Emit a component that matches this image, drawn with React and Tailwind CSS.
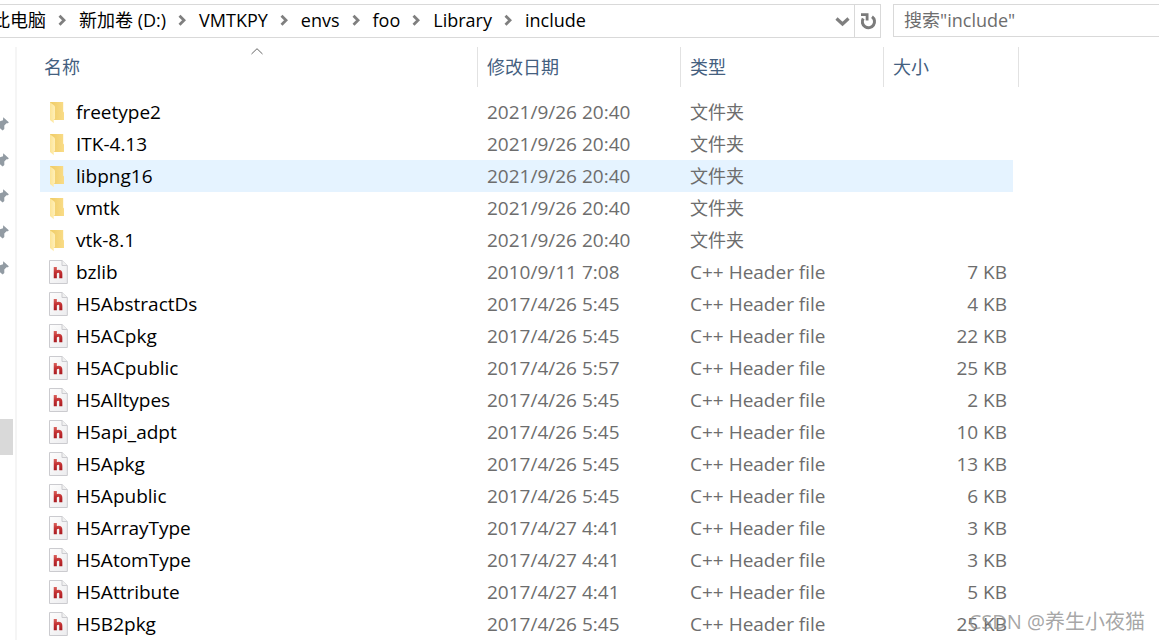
import React from 'react';

const crumbs = ['此电脑', '新加卷 (D:)', 'VMTKPY', 'envs', 'foo', 'Library', 'include'];

const folder = (name) => ({ name, date: '2021/9/26 20:40', folder: true });
const header = (name, date, size) => ({ name, date, size });

const rows = [
  folder('freetype2'),
  folder('ITK-4.13'),
  { ...folder('libpng16'), selected: true },
  folder('vmtk'),
  folder('vtk-8.1'),
  header('bzlib', '2010/9/11 7:08', '7 KB'),
  header('H5AbstractDs', '2017/4/26 5:45', '4 KB'),
  header('H5ACpkg', '2017/4/26 5:45', '22 KB'),
  header('H5ACpublic', '2017/4/26 5:57', '25 KB'),
  header('H5Alltypes', '2017/4/26 5:45', '2 KB'),
  header('H5api_adpt', '2017/4/26 5:45', '10 KB'),
  header('H5Apkg', '2017/4/26 5:45', '13 KB'),
  header('H5Apublic', '2017/4/26 5:45', '6 KB'),
  header('H5ArrayType', '2017/4/27 4:41', '3 KB'),
  header('H5AtomType', '2017/4/27 4:41', '3 KB'),
  header('H5Attribute', '2017/4/27 4:41', '5 KB'),
  header('H5B2pkg', '2017/4/26 5:45', '25 KB'),
];

function Chevron() {
  return (
    <svg className="h-3 w-[9px] shrink-0" viewBox="0 0 9 12" fill="none" stroke="#7f7f7f" strokeWidth="2.8" aria-hidden="true">
      <path d="M1.500 1.800 6 6.300 1.500 10.800" />
    </svg>
  );
}

function FolderIcon() {
  return (
    <svg className="h-6 w-5 shrink-0" viewBox="0 0 20 24" aria-hidden="true">
      <defs>
        <linearGradient id="folderBack" x1="0" y1="0" x2="1" y2="0">
          <stop offset="0" stopColor="#efcb66" />
          <stop offset="1" stopColor="#f9dc87" />
        </linearGradient>
        <linearGradient id="folderFlap" x1="0" y1="0" x2="1" y2="0">
          <stop offset="0" stopColor="#fce496" />
          <stop offset="1" stopColor="#ffefb8" />
        </linearGradient>
      </defs>
      <path d="M2 2h13.200v9.500l.8 1v7.500H6L2 19z" fill="url(#folderBack)" />
      <path d="M2 2.200 6.200 5.500q.8.700.8 1.800V19l-1.200 1v3.200L2 20z" fill="url(#folderFlap)" />
    </svg>
  );
}

function HeaderIcon() {
  return (
    <svg className="h-6 w-5 shrink-0" viewBox="0 0 20 24" aria-hidden="true">
      <defs>
        <linearGradient id="hLetter" gradientUnits="userSpaceOnUse" x1="0" y1="7" x2="0" y2="18">
          <stop offset="0" stopColor="#d9625c" />
          <stop offset=".5" stopColor="#c22f31" />
          <stop offset="1" stopColor="#aa1c22" />
        </linearGradient>
        <linearGradient id="hPage" x1="0" y1="0" x2="1" y2="1">
          <stop offset="0" stopColor="#fdfdfd" />
          <stop offset="1" stopColor="#ececee" />
        </linearGradient>
      </defs>
      <path d="M1.500.5h12.500l5.300 5v18H1.500z" fill="url(#hPage)" stroke="#cbcbcf" />
      <path d="M14 .5v5h5.300" fill="#f0f0f0" stroke="#cbcbcf" />
      <path d="M7.300 7v11.300M7.300 13q1.300-1.700 3.200-1.700 2.300 0 2.300 2.500v4.500" fill="none" stroke="url(#hLetter)" strokeWidth="3.100" />
    </svg>
  );
}

function Pin() {
  return (
    <svg className="h-4 w-[9px]" viewBox="0 0 9 16" fill="#929ba3" aria-hidden="true">
      <path d="M3.200 1.200 8.800 6.200 8 7.300 6.500 7.200 4.300 9.500v3.500L2.600 14.500 0 12.200V5.200l3-1z" />
    </svg>
  );
}

function ColumnHead({ children, className = '', sorted }) {
  return (
    <th scope="col" className={`relative h-10 border-r border-[#e2e2e2] p-0 text-left text-lg font-normal text-[#44607f] ${className}`}>
      {sorted && (
        <svg className="absolute left-1/2 top-0 -ml-2 h-2 w-3" viewBox="0 0 12 8" fill="none" stroke="#666" aria-hidden="true">
          <path d="M.5 7 6 1.700l5.500 5.300" />
        </svg>
      )}
      <button type="button" className="block leading-6">{children}</button>
    </th>
  );
}

export default function App() {
  return (
    <div className="relative flex h-screen flex-col overflow-hidden bg-white font-['Open_Sans','Noto_Sans_CJK_SC',sans-serif] text-black">
      <header className="flex gap-3 pt-1">
        <div className="flex h-[34px] min-w-0 flex-1 border border-l-0 border-[#d9d9d9]">
          <nav aria-label="路径" className="-ml-2 flex min-w-0 flex-1 items-center gap-3 overflow-hidden whitespace-nowrap pb-0.5 text-lg leading-8">
            {crumbs.map((label, i) => (
              <React.Fragment key={label}>
                {i > 0 && <Chevron />}
                <a href="#">{label}</a>
              </React.Fragment>
            ))}
          </nav>
          <button type="button" aria-label="以前的位置" className="flex w-6 items-center justify-center">
            <svg className="h-3 w-4" viewBox="0 0 16 12" fill="none" stroke="#7f7f7f" strokeWidth="3.200" aria-hidden="true">
              <path d="M2.500 3.500l6 5.500 6-5.500" />
            </svg>
          </button>
          <button type="button" aria-label="刷新" className="flex w-[26px] items-center justify-center border-l border-[#d9d9d9]">
            <svg className="h-[18px] w-[18px]" viewBox="0 0 18 18" aria-hidden="true">
              <path d="M4.200 6.500A6.100 6.100 0 1 0 13 4.700" fill="none" stroke="#7b7b7b" strokeWidth="3" />
              <path d="M2 1.200h7.500v7.300H6.700V4H2z" fill="#7b7b7b" />
            </svg>
          </button>
        </div>
        <input
          type="search"
          aria-label="搜索"
          placeholder={'搜索"include"'}
          className="h-[33px] w-[266px] border border-r-0 border-[#d9d9d9] bg-white px-2.5 pb-0.5 text-lg outline-none placeholder:text-[#6d6d6d]"
        />
      </header>

      <div className="flex min-h-0 flex-1 pt-[9px]">
        <aside className="flex w-[17px] flex-col border-r-2 border-[#f5f5f5] pt-[59px]">
          {[0, 1, 2, 3, 4].map((n) => (
            <div key={n} className="flex h-9 items-center">
              <Pin />
            </div>
          ))}
          <div className="mt-[133px] h-9 w-[13px] bg-[#d9d9d9]" />
        </aside>

        <main className="min-w-0 flex-1 overflow-hidden pl-[23px]">
          <table className="w-[979px] table-fixed border-separate border-spacing-0">
            <colgroup>
              <col className="w-[438px]" />
              <col className="w-[203px]" />
              <col className="w-[203px]" />
              <col className="w-[135px]" />
            </colgroup>
            <thead>
              <tr>
                <ColumnHead sorted className="pl-1">名称</ColumnHead>
                <ColumnHead className="pl-[9px]">修改日期</ColumnHead>
                <ColumnHead className="pl-[9px]">类型</ColumnHead>
                <ColumnHead className="pl-[9px]">大小</ColumnHead>
              </tr>
            </thead>
            <tbody className="text-[#6d6d6d] before:block before:h-[9px]">
              {rows.map((r) => (
                <tr key={r.name} className="text-[19px] leading-8">
                  <td className={`h-8 p-0 pl-2 text-black ${r.selected ? 'bg-[#e5f3ff]' : ''}`}>
                    <div className="flex h-8 items-center gap-2">
                      {r.folder ? <FolderIcon /> : <HeaderIcon />}
                      <span>{r.name}</span>
                    </div>
                  </td>
                  <td className={`p-0 pl-[9px] ${r.selected ? 'bg-[#e5f3ff]' : ''}`}>{r.date}</td>
                  <td className={`p-0 pl-[9px] ${r.folder ? 'text-lg leading-8' : ''} ${r.selected ? 'bg-[#e5f3ff]' : ''}`}>
                    {r.folder ? '文件夹' : 'C++ Header file'}
                  </td>
                  <td className={`border-r-[6px] border-white p-0 pr-1.5 text-right ${r.selected ? 'bg-[#e5f3ff]' : ''}`}>{r.size}</td>
                </tr>
              ))}
            </tbody>
          </table>
        </main>
      </div>

      <div className="pointer-events-none absolute bottom-1 right-3.5 text-xl leading-7 text-[#8f8f8f]/80">CSDN @养生小夜猫</div>
    </div>
  );
}
